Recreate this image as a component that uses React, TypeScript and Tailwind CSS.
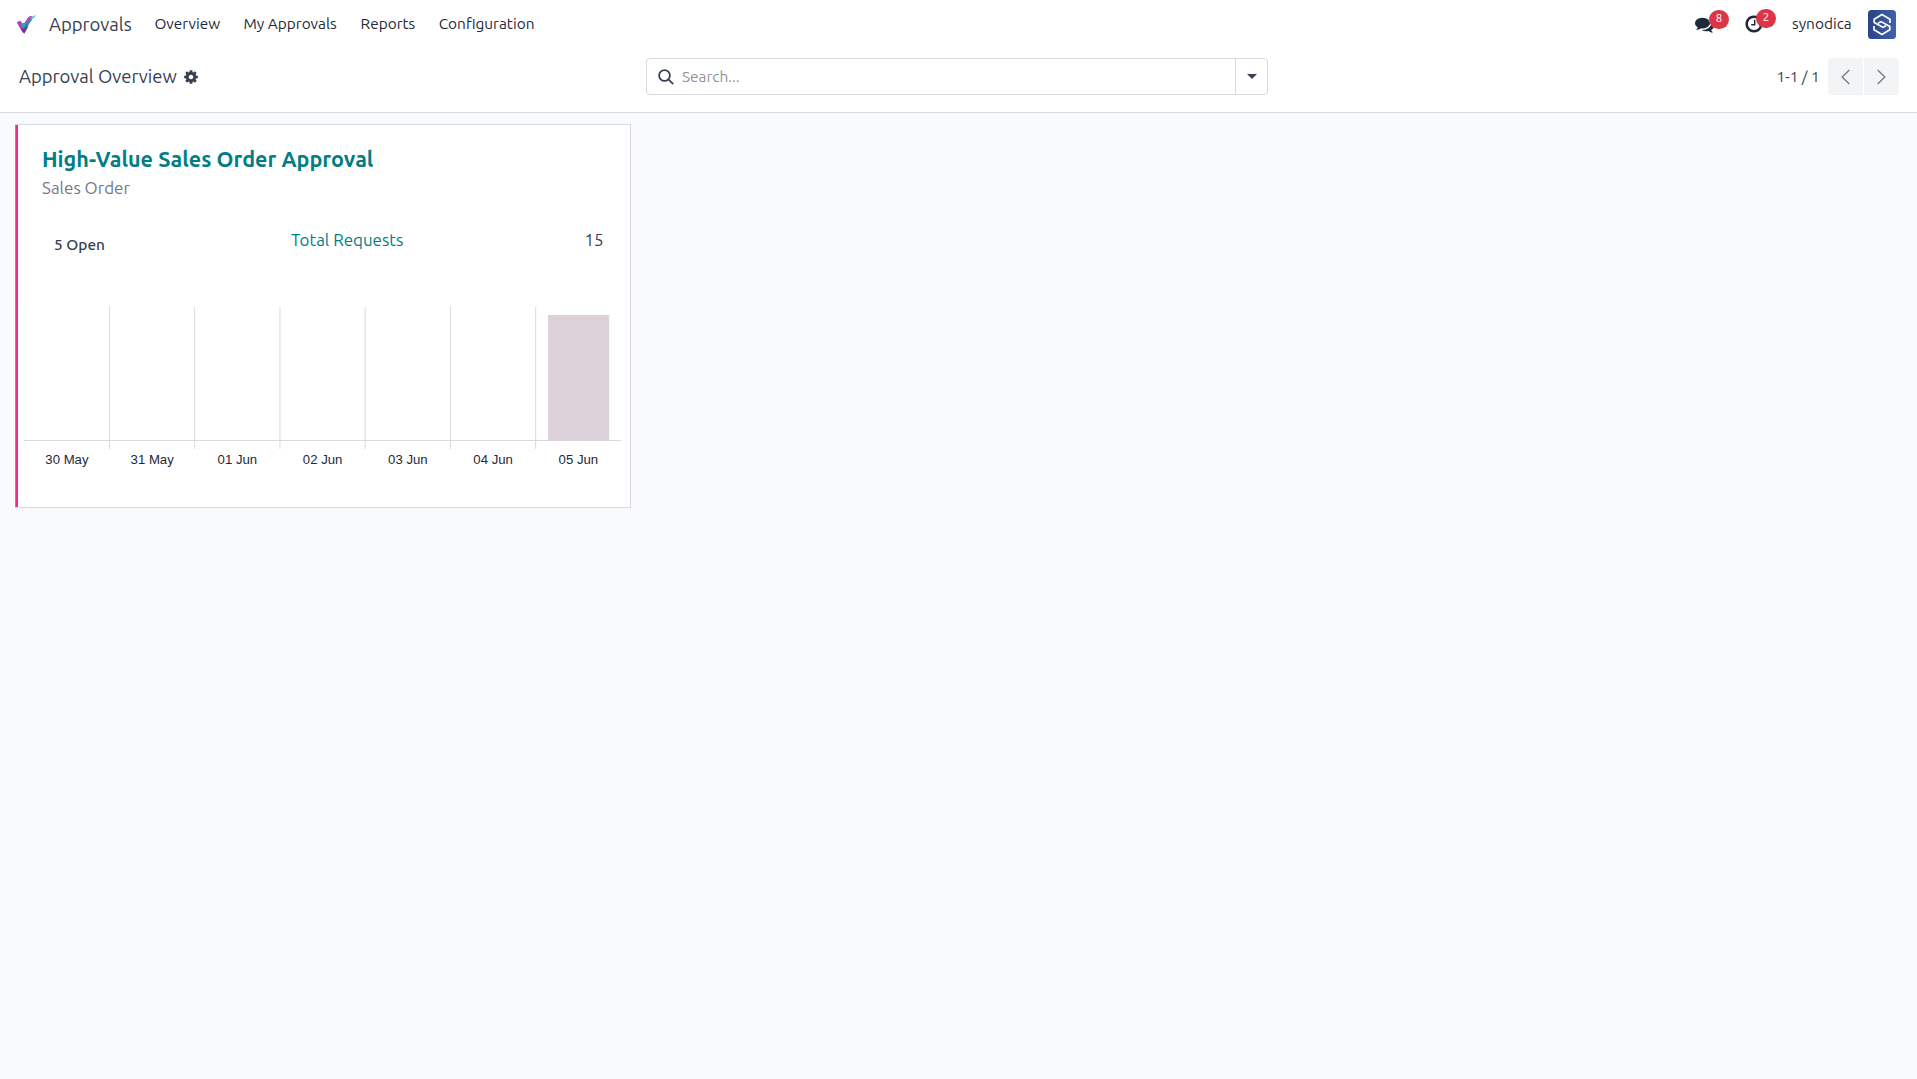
import React from 'react';

const FONT = "font-['Ubuntu','Noto_Sans',sans-serif]";

const PATHS = {
    cog: 'M1152 896q0-106-75-181t-181-75-181 75-75 181 75 181 181 75 181-75 75-181zm512-109v222q0 12-8 23t-20 13l-185 28q-19 54-39 91 35 50 107 138 10 12 10 25t-9 23q-27 37-99 108t-94 71q-12 0-26-9l-138-108q-44 23-91 38-16 136-29 186-7 28-36 28h-222q-14 0-24.5-8.5t-11.5-21.5l-28-184q-49-16-90-37l-141 107q-10 9-25 9-14 0-25-11-126-114-165-168-7-10-7-23 0-12 8-23 15-21 51-66.5t54-70.5q-27-50-41-99l-183-27q-13-2-21-12.5t-8-23.5v-222q0-12 8-23t19-13l186-28q14-46 39-92-40-57-107-138-10-12-10-24 0-10 9-23 26-36 98.5-107.5t94.5-71.5q13 0 26 10l138 107q44-23 91-38 16-136 29-186 7-28 36-28h222q14 0 24.5 8.5t11.5 21.5l28 184q49 16 90 37l142-107q9-9 24-9 13 0 25 10 129 119 165 170 7 8 7 22 0 12-8 23-15 21-51 66.5t-54 70.5q26 50 41 98l183 28q13 2 21 12.5t8 23.5z',
    comments: 'M1408 768q0 139-94 257t-256.5 186.5-353.5 68.5q-86 0-176-16-124 88-278 128-36 9-86 16h-3q-11 0-20.5-8t-11.5-21q-1-3-1-6.5t.5-6.5 2-6l2.5-5 3.5-5.5 4-5 4.5-5 4-4.5q5-6 23-25t26-29.5 22.5-29 25-38.5 20.5-44q-124-72-195-177t-71-224q0-139 94-257t256.5-186.5 353.5-68.5 353.5 68.5 256.5 186.5 94 257zm384 256q0 120-71 224.5t-195 176.5q10 24 20.5 44t25 38.5 22.5 29 26 29.5 23 25q1 1 4 4.5t4.5 5 4 5 3.5 5.5l2.5 5 2 6 .5 6.5-1 6.5q-3 14-13 22t-22 7q-50-7-86-16-154-40-278-128-90 16-176 16-271 0-472-132 58 4 88 4 161 0 309-45t264-129q125-92 192-212t67-254q0-77-23-152 129 71 204 178t75 230z',
    clock: 'M1024 544v448q0 14-9 23t-23 9h-320q-14 0-23-9t-9-23v-64q0-14 9-23t23-9h224v-352q0-14 9-23t23-9h64q14 0 23 9t9 23zm416 352q0-148-73-273t-198-198-273-73-273 73-198 198-73 273 73 273 198 198 273 73 273-73 198-198 73-273zm224 0q0 209-103 385.5t-279.5 279.5-385.5 103-385.5-103-279.5-279.5-103-385.5 103-385.5 279.5-279.5 385.5-103 385.5 103 279.5 279.5 103 385.5z'
};

const Icon = ({ name, className }: { name: keyof typeof PATHS; className: string }) => (
    <svg viewBox="0 0 1792 1792" fill="currentColor" className={className}>
        <path d={PATHS[name]} />
    </svg>
);

const Logo = () => (
    <svg viewBox="0 0 20 20" className="w-5 h-5 shrink-0">
        <path d="M0.8 8.4 4 6.4 7.4 10.6 12.4 3 15.2 1.8 16.4 2.6 8.4 19.6 6.6 18.4Z" fill="#b044b8" />
        <path d="M4.6 14.4 8.2 19.6 12.6 12 8 14.6Z" fill="#7b2f8e" />
        <path d="M5 10 7.6 8.8 8.8 10.6 14 5 17 4.2 8.4 15.2Z" fill="#17b3bd" />
        <path d="M11 9.8 17 4.2 8.4 15.2 7.6 14Z" fill="#12818f" />
        <path d="M13.8 3.4 17.4 2.2 19.6 0.8 18.6 3.6 15.6 4.6Z" fill="#3cc6cf" />
    </svg>
);

const Avatar = () => (
    <svg viewBox="0 0 28 29" className="w-7 h-[29px]">
        <defs>
            <linearGradient id="avatar" x1="0" x2="1">
                <stop offset="0" stopColor="#2a4289" />
                <stop offset="1" stopColor="#4163a9" />
            </linearGradient>
        </defs>
        <rect width="28" height="29" rx="3.5" fill="url(#avatar)" />
        <g fill="none" stroke="#fff" strokeWidth="1.7">
            <path d="M22 13V9.2L14 4.6 6.2 9.2V12.4L15 17.4 18 15.8" />
            <path d="M6 16V19.8L14 24.4 21.8 19.8V16.6L13 11.6 10 13.2" />
        </g>
    </svg>
);

const menu = [
    { label: 'Overview', className: 'w-[67px]' },
    { label: 'My Approvals', className: 'w-[95px]' },
    { label: 'Reports', className: 'w-[56px]' },
    { label: 'Configuration', className: 'w-[97px]' }
];

const days = ['30 May', '31 May', '01 Jun', '02 Jun', '03 Jun', '04 Jun', '05 Jun'];
const STEP = 85.25;

const Chart = () => (
    <svg width="597" height="180" className="block ml-1.5 mt-[50px] overflow-visible">
        {days.map((day, i) => (
            <g key={day}>
                <line x1={i * STEP + 0.2} x2={i * STEP + 0.2} y1="0" y2="142" stroke={i === 0 ? '#f8f8f9' : '#d8dadd'} />
                <text x={(i + 0.5) * STEP + 0.3} y="157" textAnchor="middle" className="font-['Liberation_Sans',Arial,sans-serif] text-[13.2px]" fill="#1f2937">{day}</text>
            </g>
        ))}
        <line x1="0" x2="597" y1="133.5" y2="133.5" stroke="#d8dadd" />
        <rect x="524" y="8" width="61.2" height="126" fill="#dcd0d9" />
    </svg>
);

const App = () => {
    return (
        <div className={`${FONT} h-screen flex flex-col bg-[#f9fafb] text-[#374151] whitespace-nowrap overflow-hidden`}>
            {/* Navbar */}
            <header className="h-12 bg-white flex items-center justify-between pl-4 pr-[21px] shrink-0">
                <div className="flex items-center">
                    <Logo />
                    <span className="ml-[13px] pt-px w-[105.4px] text-[18.48px]">Approvals</span>
                    <nav className="flex gap-[22.1px] text-[15.4px] text-[#1f2937]">
                        {menu.map((item) => (
                            <a key={item.label} className={item.className}>{item.label}</a>
                        ))}
                    </nav>
                </div>
                <div className="flex items-center text-[#1f2937]">
                    <div className="relative w-[50px]">
                        <Icon name="comments" className="w-[19px] h-[19px]" />
                        <span className="absolute left-3.5 -top-[5px] w-5 h-[19px] rounded-full bg-[#dc3545] text-white text-[11.5px] leading-[15px] text-center">8</span>
                    </div>
                    <div className="relative w-[47px]">
                        <Icon name="clock" className="w-5 h-5 -ml-[1.5px]" />
                        <span className="absolute left-[11px] -top-[5px] w-5 h-[19px] rounded-full bg-[#dc3545] text-white text-[11.5px] leading-[15px] text-center">2</span>
                    </div>
                    <span className="w-[76px] text-[15.4px]">synodica</span>
                    <Avatar />
                </div>
            </header>

            {/* Control panel */}
            <div className="h-[65px] bg-white border-b border-[#d8dadd] flex pt-2.5 pl-[19px] pr-[18px] shrink-0">
                <div className="flex items-center h-[37px] w-[627px]">
                    <span className="text-[18.48px] w-[164px]">Approval Overview</span>
                    <Icon name="cog" className="w-4 h-4" />
                </div>
                <div className="flex h-[37px] w-[622px] border border-[#d8dadd] rounded">
                    <div className="flex-1 flex items-center pl-[11px]">
                        <svg viewBox="0 0 16 16" className="w-4 h-4" fill="none" stroke="#374151" strokeWidth="1.8">
                            <circle cx="6.5" cy="6.5" r="5.4" />
                            <path d="M10.4 10.4 15.2 15.2" />
                        </svg>
                        <span className="ml-2 pt-px text-[15.4px] text-[#8f939c]">Search...</span>
                    </div>
                    <button className="w-8 border-l border-[#d8dadd] flex items-center justify-center">
                        <svg viewBox="0 0 10 5" className="w-2.5 h-[5px]" fill="#374151">
                            <path d="M0 0h10L5 5z" />
                        </svg>
                    </button>
                </div>
                <div className="flex items-center h-[37px] ml-auto">
                    <span className="text-[15.4px] pt-px w-[51.5px]">1-1 / 1</span>
                    <div className="flex gap-px">
                        <button className="w-[35px] h-[37px] rounded-l bg-[#f3f4f6] flex items-center justify-center">
                            <svg viewBox="0 0 9 16" className="w-[9px] h-4" fill="none" stroke="#7c7d82" strokeWidth="1.4"><path d="M8.3 1 1.2 8l7.1 7" /></svg>
                        </button>
                        <button className="w-[35px] h-[37px] rounded-r bg-[#f3f4f6] flex items-center justify-center">
                            <svg viewBox="0 0 9 16" className="w-[9px] h-4" fill="none" stroke="#7c7d82" strokeWidth="1.4"><path d="M.7 1 7.8 8 .7 15" /></svg>
                        </button>
                    </div>
                </div>
            </div>

            {/* Kanban */}
            <main className="pl-[15px] pt-[11px]">
                <div className="w-[616px] h-[384px] bg-white border border-[#d8dadd] border-l-0 flex">
                    <div className="w-[3px] bg-[#f52b8c] border-l border-[#ee5fa5]" />
                    <div className="flex-1">
                        <h2 className="ml-6 mt-[18px] mb-px text-[21.56px] leading-8 font-semibold text-[#017e84]">High-Value Sales Order Approval</h2>
                        <p className="ml-6 text-[16.94px] leading-6 text-[#757985]">Sales Order</p>
                        <div className="flex mt-7">
                            <span className="ml-9 w-[237px] pt-[5px] text-[15.4px] leading-6 font-medium">5 Open</span>
                            <a className="text-[16.94px] leading-6 text-[#017e84]">Total Requests</a>
                            <span className="ml-auto mr-[26.5px] text-[16.94px] leading-6">15</span>
                        </div>
                        <Chart />
                    </div>
                </div>
            </main>
        </div>
    );
};

export default App;
